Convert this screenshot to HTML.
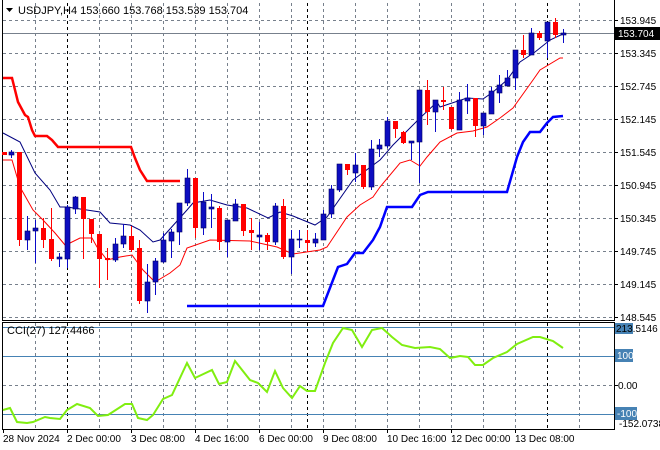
<!DOCTYPE html>
<html><head><meta charset="utf-8"><style>
body{margin:0;background:#fff;}
svg{display:block;font-family:"Liberation Sans",sans-serif;}
</style></head><body>
<svg width="660" height="450" viewBox="0 0 660 450" xmlns="http://www.w3.org/2000/svg">
<rect width="660" height="450" fill="#fff"/>
<!-- grid main -->
<g stroke="#77808c" stroke-dasharray="3,3" stroke-width="1">
<path d="M3 20.5H614M3 53.5H614M3 86.5H614M3 119.5H614M3 152.5H614M3 185.5H614M3 218.5H614M3 251.5H614M3 284.5H614M3 317.5H614"/>
<path d="M35.5 3V319M99.5 3V319M131.5 3V319M163.5 3V319M195.5 3V319M227.5 3V319M259.5 3V319M291.5 3V319M323.5 3V319M355.5 3V319M387.5 3V319M419.5 3V319M451.5 3V319M483.5 3V319M515.5 3V319M579.5 3V319"/>
<path d="M35.5 323V429M99.5 323V429M131.5 323V429M163.5 323V429M195.5 323V429M227.5 323V429M259.5 323V429M291.5 323V429M323.5 323V429M355.5 323V429M387.5 323V429M419.5 323V429M451.5 323V429M483.5 323V429M515.5 323V429M579.5 323V429"/>
<path d="M3 385.5H614"/>
</g>
<g stroke="#000" stroke-dasharray="3,3" stroke-width="1">
<path d="M67.5 3V319M307.5 3V319M547.5 3V319M67.5 323V429M307.5 323V429M547.5 323V429"/>
</g>
<!-- current price line -->
<path d="M3 33.5H614" stroke="#77808c" stroke-width="1"/>
<!-- CCI levels -->
<g stroke="#4682b4" stroke-width="1">
<path d="M3 327.5H614M3 356.5H614M3 414.5H614"/>
</g>
<!-- frames -->
<g stroke="#000" stroke-width="1" fill="none">
<path d="M2.5 0V320.5H614.5V0"/>
<path d="M2.5 322.5H614.5V429.5H2.5Z"/>
</g>
<!-- red step -->
<polyline fill="none" stroke="#ff0000" stroke-width="2.5" points="3,78 12,78 15,90 18,102 25,115 28,117 32,130 35,136 47,136 52,140 58,147 131,147 135,158 140,170 147,181 180,181"/>
<!-- blue step -->
<polyline fill="none" stroke="#0000ff" stroke-width="2.5" points="187,306 323,306 333,280 338,267 347,264 355,253 363,253 373,240 380,227 387,207 412,207 420,195 428,192 507,192 517,157 523,142 530,132 540,132 547,123 553,117 563,116"/>
<!-- navy MA -->
<polyline fill="none" stroke="#000080" stroke-width="1" points="3,133 20,142 35,173 50,190 60,207 67,207 100,212 110,223 130,225 140,230 153,242 160,240 187,210 193,203 210,200 227,205 247,208 268,218 280,212 293,216 315,225 327,217 353,180 380,160 393,145 420,118 437,102 440,107 467,98 483,99 493,92 507,80 520,62 535,52 550,40 565,33"/>
<!-- red MA -->
<polyline fill="none" stroke="#ff0000" stroke-width="1" points="3,160 12,160 20,187 33,210 43,220 55,233 65,245 70,243 80,238 92,238 97,247 107,260 120,257 132,255 143,270 155,282 170,273 180,265 187,248 210,240 250,241 277,247 293,254 320,250 327,247 347,217 360,205 373,197 380,187 400,163 410,160 420,166 427,157 440,142 457,133 473,131 487,127 500,118 513,108 533,80 540,70 560,58 563,58"/>
<!-- wicks -->
<path stroke="#ff0000" stroke-width="1" fill="none" d="M4.5 152V155M19.5 152V246M43.5 218V248M51.5 208V261M83.5 197V259M91.5 219V243M99.5 234V288M107.5 248V280M131.5 226V252M139.5 240V304M195.5 178V238M219.5 206V250M243.5 204V236M251.5 218V250M267.5 233V250M283.5 199V259M307.5 230V252M347.5 164V175M363.5 165V189M395.5 121V138M403.5 131V144M427.5 80V125M443.5 87V110M451.5 107V130M475.5 98V137M523.5 35V58M539.5 31V40M555.5 18V38"/>
<path stroke="#0a0ac8" stroke-width="1" fill="none" d="M11.5 150V158M27.5 216V250M35.5 220V263M59.5 253V267M67.5 205V268M75.5 196V214M115.5 238V262M123.5 224V248M147.5 264V313M155.5 258V295M163.5 233V263M171.5 229V258M179.5 203V245M187.5 169V206M203.5 192V235M211.5 194V228M227.5 220V257M235.5 199V221M259.5 222V250M275.5 203V245M291.5 230V274M299.5 230V248M315.5 233V247M323.5 210V240M331.5 185V218M339.5 164V192M355.5 153V182M371.5 140V190M379.5 139V157M387.5 117V148M411.5 141V160M419.5 90V183M435.5 100V132M459.5 92V130M467.5 84V114M483.5 113V135M491.5 87V114M499.5 75V103M507.5 70V86M515.5 50V90M531.5 28V55M547.5 22V58M563.5 29V43"/>
<!-- red bodies -->
<g fill="#ff0000">
<rect x="2" y="152" width="5" height="3"/><rect x="17" y="152" width="5" height="88"/><rect x="41" y="228" width="5" height="12"/><rect x="49" y="239" width="5" height="20"/><rect x="81" y="197" width="5" height="22"/><rect x="89" y="219" width="5" height="15"/><rect x="97" y="234" width="5" height="25"/><rect x="105" y="258" width="5" height="2"/><rect x="129" y="236" width="5" height="14"/><rect x="137" y="248" width="5" height="53"/><rect x="193" y="178" width="5" height="50"/><rect x="217" y="208" width="5" height="34"/><rect x="241" y="204" width="5" height="27"/><rect x="249" y="230" width="5" height="3"/><rect x="265" y="235" width="5" height="7"/><rect x="281" y="206" width="5" height="51"/><rect x="305" y="240" width="5" height="3"/><rect x="345" y="164" width="5" height="6"/><rect x="361" y="165" width="5" height="22"/><rect x="393" y="121" width="5" height="8"/><rect x="401" y="132" width="5" height="11"/><rect x="425" y="90" width="5" height="22"/><rect x="441" y="100" width="5" height="2"/><rect x="449" y="107" width="5" height="22"/><rect x="473" y="98" width="5" height="28"/><rect x="521" y="50" width="5" height="5"/><rect x="537" y="33" width="5" height="5"/><rect x="553" y="22" width="5" height="13"/>
</g>
<!-- blue bodies -->
<g fill="#0d0dc0" stroke="#000060" stroke-width="0.6">
<rect x="9" y="152" width="5" height="3"/><rect x="25" y="231" width="5" height="9"/><rect x="33" y="228" width="5" height="3"/><rect x="57" y="257" width="5" height="2"/><rect x="65" y="207" width="5" height="52"/><rect x="73" y="197" width="5" height="12"/><rect x="113" y="244" width="5" height="16"/><rect x="121" y="236" width="5" height="8"/><rect x="145" y="282" width="5" height="19"/><rect x="153" y="261" width="5" height="21"/><rect x="161" y="240" width="5" height="22"/><rect x="169" y="232" width="5" height="9"/><rect x="177" y="203" width="5" height="29"/><rect x="185" y="178" width="5" height="25"/><rect x="201" y="202" width="5" height="26"/><rect x="209" y="207" width="5" height="2"/><rect x="225" y="220" width="5" height="22"/><rect x="233" y="204" width="5" height="17"/><rect x="257" y="235" width="5" height="2"/><rect x="273" y="206" width="5" height="36"/><rect x="289" y="239" width="5" height="18"/><rect x="297" y="239" width="5" height="1"/><rect x="313" y="239" width="5" height="4"/><rect x="321" y="214" width="5" height="26"/><rect x="329" y="189" width="5" height="25"/><rect x="337" y="164" width="5" height="26"/><rect x="353" y="165" width="5" height="8"/><rect x="369" y="149" width="5" height="38"/><rect x="377" y="145" width="5" height="4"/><rect x="385" y="121" width="5" height="25"/><rect x="409" y="141" width="5" height="2"/><rect x="417" y="90" width="5" height="52"/><rect x="433" y="100" width="5" height="12"/><rect x="457" y="100" width="5" height="30"/><rect x="465" y="98" width="5" height="3"/><rect x="481" y="113" width="5" height="13"/><rect x="489" y="91" width="5" height="23"/><rect x="497" y="85" width="5" height="8"/><rect x="505" y="78" width="5" height="8"/><rect x="513" y="50" width="5" height="28"/><rect x="529" y="33" width="5" height="22"/><rect x="545" y="22" width="5" height="19"/><rect x="561" y="33" width="5" height="2"/>
</g>
<!-- CCI -->
<polyline fill="none" stroke="#80ee10" stroke-width="2" points="3,410 10,408 17,422 27,423 33,422 45,417 50,418 60,419 67,410 77,404 90,408 98,416 108,415 125,404 132,404 138,418 147,420 153,415 163,399 172,395 187,363 195,378 212,370 219,384 227,382 235,361 250,380 258,383 267,392 275,371 283,388 292,398 300,386 307,391 315,391 325,363 333,343 343,328 352,330 362,347 372,330 382,328 392,337 402,345 415,348 430,347 440,349 450,358 460,356 468,357 475,365 483,365 493,358 507,352 517,344 533,337 540,337 553,341 563,348"/>
<!-- header -->
<path d="M6 8H13L9.5 12Z" fill="#000"/>
<text x="18" y="14" font-size="11" fill="#000">USDJPY,H4  153.660 153.768 153.539 153.704</text>
<text x="7" y="334" font-size="11" fill="#000">CCI(27) 127.4466</text>
<!-- right axis -->
<g font-size="10" fill="#000">
<path d="M614 20.5h4M614 53.5h4M614 86.5h4M614 119.5h4M614 152.5h4M614 185.5h4M614 218.5h4M614 251.5h4M614 284.5h4M614 317.5h4M614 385.5h4" stroke="#000"/>
<text x="620" y="24">153.945</text>
<text x="620" y="57">153.345</text>
<text x="620" y="90">152.745</text>
<text x="620" y="123">152.145</text>
<text x="620" y="156">151.545</text>
<text x="620" y="189">150.945</text>
<text x="620" y="222">150.345</text>
<text x="620" y="255">149.745</text>
<text x="620" y="288">149.145</text>
<text x="620" y="321">148.545</text>
<rect x="615" y="27" width="45" height="13" fill="#000"/>
<text x="618" y="37" fill="#fff">153.704</text>
<rect x="615" y="323" width="18" height="11" fill="#4682b4"/>
<text x="616" y="332" fill="#000">213.5146</text>
<rect x="615" y="349" width="18" height="13" fill="#4682b4"/>
<text x="617" y="359" fill="#fff">100</text>
<text x="618" y="389">0.00</text>
<rect x="615" y="407" width="22" height="13" fill="#4682b4"/>
<text x="617" y="417" fill="#fff">-100</text>
<text x="619" y="427">-152.0738</text>
</g>
<!-- bottom axis -->
<g font-size="10" fill="#000">
<path d="M3.5 429v4M67.5 429v4M131.5 429v4M195.5 429v4M259.5 429v4M323.5 429v4M387.5 429v4M451.5 429v4M515.5 429v4" stroke="#000"/>
<text x="3" y="442">28 Nov 2024</text>
<text x="67" y="442">2 Dec 00:00</text>
<text x="131" y="442">3 Dec 08:00</text>
<text x="195" y="442">4 Dec 16:00</text>
<text x="259" y="442">6 Dec 00:00</text>
<text x="323" y="442">9 Dec 08:00</text>
<text x="387" y="442">10 Dec 16:00</text>
<text x="451" y="442">12 Dec 00:00</text>
<text x="515" y="442">13 Dec 08:00</text>
</g>
</svg>
</body></html>
